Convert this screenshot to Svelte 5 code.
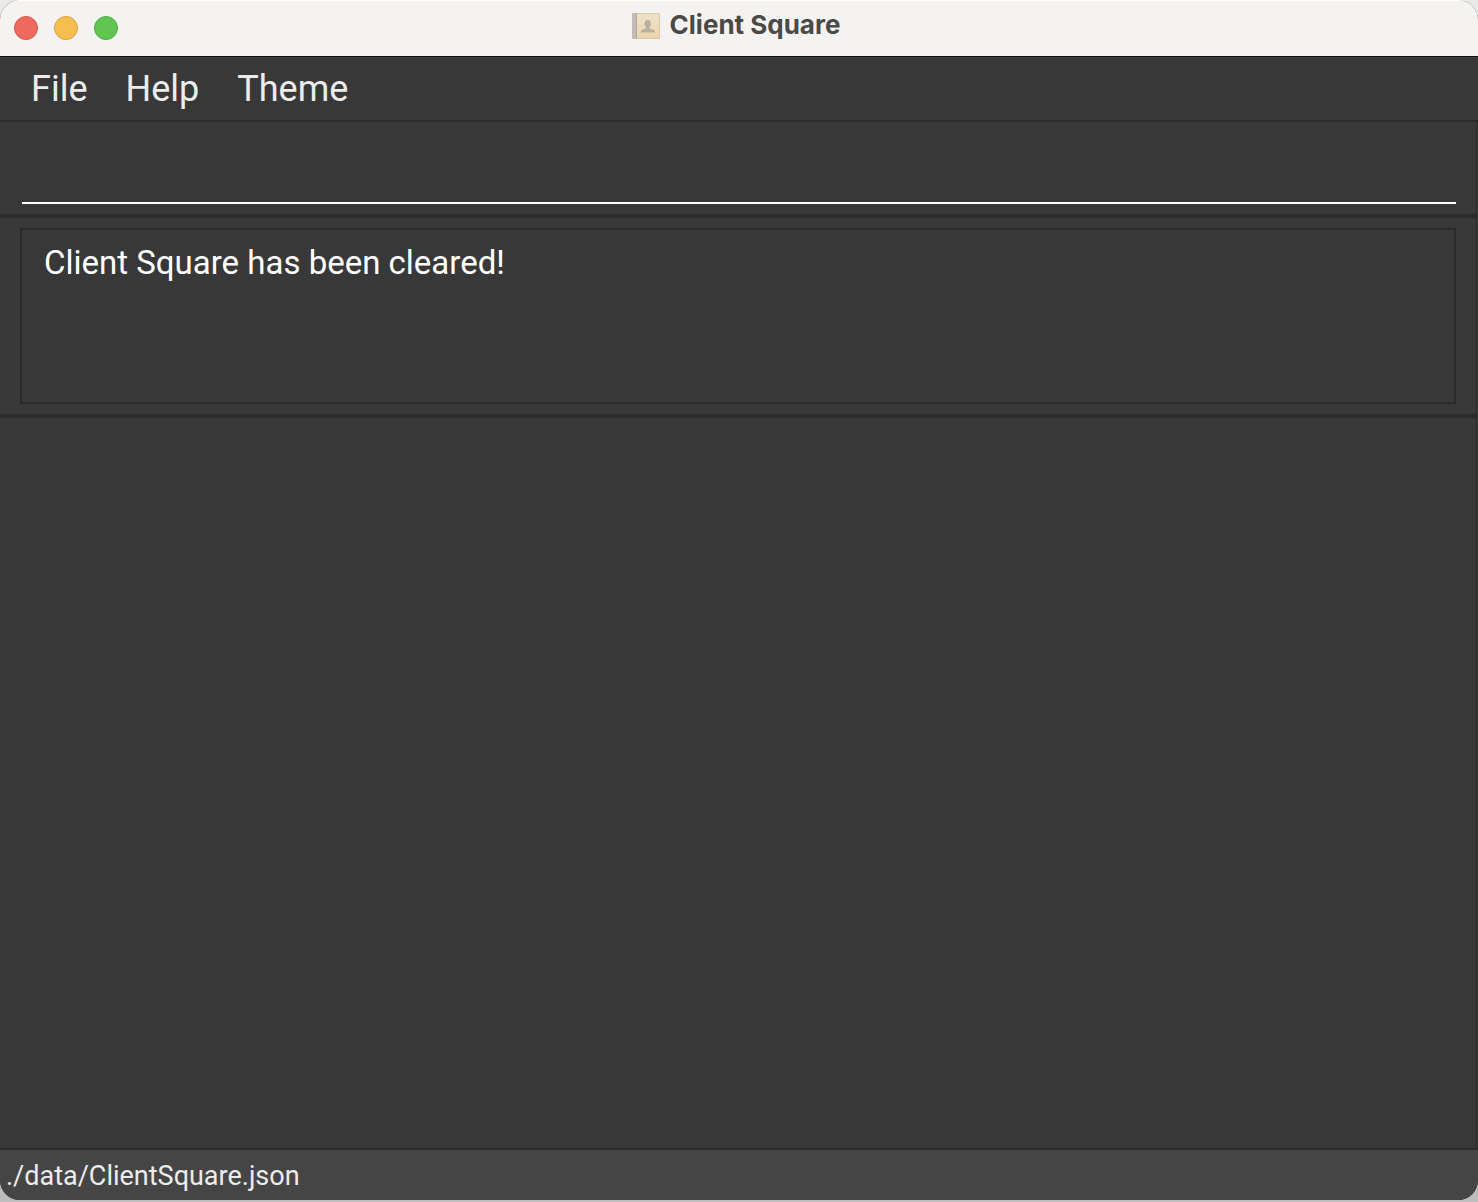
<script>
  const menus = ['File', 'Help', 'Theme'];
  const lights = [
    { name: 'Close', kind: 'close' },
    { name: 'Minimise', kind: 'minimise' },
    { name: 'Zoom', kind: 'zoom' }
  ];
  let command = $state('');
  let result = $state('Client Square has been cleared!');
</script>

<div class="desktop">
  <div class="window">
    <header class="titlebar">
      <div class="lights">
        {#each lights as light}
          <button class="light {light.kind}" aria-label={light.name}></button>
        {/each}
      </div>
      <h1 class="title">
        <svg class="book" viewBox="0 0 28 26" aria-hidden="true">
          <defs>
            <linearGradient id="cover" x1="0" y1="0" x2="0" y2="1">
              <stop offset="0" stop-color="#eee2c9" />
              <stop offset="1" stop-color="#ecd5a9" />
            </linearGradient>
          </defs>
          <rect x="0" y="0" width="28" height="26" rx="1" fill="#d9c9aa" />
          <rect x="5" y="1" width="22" height="24" fill="url(#cover)" />
          <rect x="0" y="0" width="5" height="26" rx="1" fill="#c3bcb6" />
          <rect x="4" y="0" width="1" height="26" fill="#b0a9a2" />
          <path d="M9 19.500v-1.800c.8-1.400 3.200-1.500 4.800-2.300v-1.400c-.9-1-1.300-2-1.200-3.600 0-2.200 1.200-3.400 3.100-3.400s3.100 1.200 3.100 3.400c.1 1.600-.3 2.600-1.200 3.600v1.400c1.600.8 4.600.9 5.400 2.300v1.800z" fill="#b9afa2" />
        </svg>
        <span>Client Square</span>
      </h1>
    </header>

    <nav class="menubar">
      {#each menus as menu}
        <button class="menu">{menu}</button>
      {/each}
    </nav>

    <main class="content">
      <section class="command">
        <input type="text" aria-label="Command" bind:value={command} />
      </section>
      <section class="result">
        <textarea readonly aria-label="Result" value={result}></textarea>
      </section>
      <section class="list" aria-label="Clients"></section>
    </main>

    <footer class="status">./data/ClientSquare.json</footer>
  </div>
</div>

<style>
  :global(body) {
    margin: 0;
  }

  .desktop {
    box-sizing: border-box;
    display: flex;
    min-height: 100vh;
    padding-bottom: 2px;
    background: linear-gradient(#e9e9e9, #bdbdbd);
    font-family: Roboto, 'Liberation Sans', sans-serif;
  }

  .window {
    flex: 1;
    display: flex;
    flex-direction: column;
    overflow: hidden;
    border-radius: 20px;
    background: #383838;
  }

  .titlebar {
    display: grid;
    grid-template-columns: 1fr auto 1fr;
    align-items: center;
    height: 56px;
    padding: 0 20px 0 14px;
    border-bottom: 1px solid #111;
    background: #f5f3f2;
    box-shadow: inset 0 1px #fff;
  }

  .lights {
    display: flex;
    gap: 16px;
  }

  .light {
    width: 24px;
    height: 24px;
    padding: 0;
    border: 1px solid;
    border-radius: 50%;
  }

  .close {
    border-color: #d9544a;
    background: #ec6a5e;
  }

  .minimise {
    border-color: #dba03c;
    background: #f4bf4f;
  }

  .zoom {
    border-color: #4fac3d;
    background: #61c554;
  }

  .title {
    display: flex;
    align-items: center;
    gap: 10px;
    margin: 0;
    padding-bottom: 6px;
    color: #4a4a49;
    font-family: Inter, 'Liberation Sans', sans-serif;
    font-size: 26px;
    font-weight: 700;
    line-height: 32px;
  }

  .book {
    width: 28px;
    height: 26px;
    margin-top: 2px;
  }

  .menubar {
    display: flex;
    height: 63px;
    padding-left: 12px;
    border-bottom: 2px solid #2b2b2b;
  }

  .menu {
    padding: 0 19px;
    border: 0;
    background: none;
    color: #ececec;
    font: inherit;
    font-size: 36px;
    line-height: 62px;
  }

  .content {
    flex: 1;
    display: flex;
    flex-direction: column;
    margin-right: 1px;
    border-right: 1px solid #2b2b2b;
  }

  .command {
    padding: 10px 20px 10px 22px;
    border-bottom: 4px solid #2b2b2b;
  }

  .command input {
    display: block;
    box-sizing: border-box;
    width: 100%;
    height: 72px;
    padding: 0;
    border: 0;
    border-bottom: 2px solid #fff;
    outline: 0;
    background: none;
    color: #fff;
    font: inherit;
    font-size: 33px;
  }

  .result {
    padding: 10px 20px;
    border-bottom: 4px solid #2b2b2b;
  }

  .result textarea {
    display: block;
    box-sizing: border-box;
    width: 100%;
    height: 176px;
    padding: 12px 22px;
    border: 2px solid #2b2b2b;
    outline: 0;
    resize: none;
    background: none;
    color: #fff;
    font: inherit;
    font-size: 33px;
    line-height: 42px;
  }

  .list {
    flex: 1;
  }

  .status {
    height: 50px;
    padding-left: 6px;
    border-top: 2px solid #2b2b2b;
    background: #454545;
    color: #ececec;
    font-size: 27px;
    line-height: 52px;
  }
</style>
